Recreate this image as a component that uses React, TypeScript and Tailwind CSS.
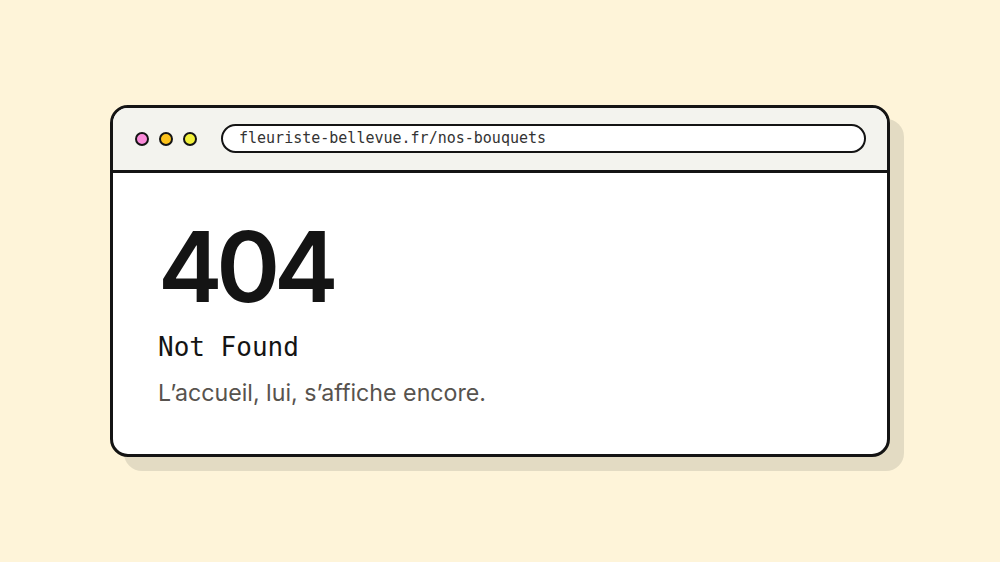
export default function App() {
  return (
    <div className="w-[1000px] h-[562px] bg-[#fef4d9] flex items-center justify-center">
      <div className="w-[780px] rounded-[18px] border-[3px] border-[#141414] bg-white shadow-[14px_14px_0_#e3dbc3] overflow-hidden">
        <div className="h-[65px] bg-[#f3f3ee] border-b-[3px] border-[#141414] flex items-center pl-[22px] pr-[21px]">
          <div className="flex gap-[10px]">
            <span className="w-[14px] h-[14px] rounded-full border-2 border-[#141414] bg-[#f98bd9]" />
            <span className="w-[14px] h-[14px] rounded-full border-2 border-[#141414] bg-[#fcc21b]" />
            <span className="w-[14px] h-[14px] rounded-full border-2 border-[#141414] bg-[#f1f03a]" />
          </div>
          <div className="ml-[24px] flex-1 h-[29px] rounded-full border-2 border-[#141414] bg-white flex items-center pl-[16px] text-[15px] text-[#333] font-['DejaVu_Sans_Mono',monospace]">
            fleuriste-bellevue.fr/nos-bouquets
          </div>
        </div>
        <div className="pt-[45px] pb-[45px] px-[45px]">
          <div className="text-[97px] leading-none font-semibold tracking-[-0.065em] text-[#141414] font-['Inter',sans-serif]">
            404
          </div>
          <div className="mt-[17px] text-[26px] leading-[1.2] text-[#141414] font-['DejaVu_Sans_Mono',monospace]">
            Not Found
          </div>
          <div className="mt-[14px] text-[23.2px] leading-[1.4] text-[#57534e] font-['Inter',sans-serif]">
            L’accueil, lui, s’affiche encore.
          </div>
        </div>
      </div>
    </div>
  );
}
